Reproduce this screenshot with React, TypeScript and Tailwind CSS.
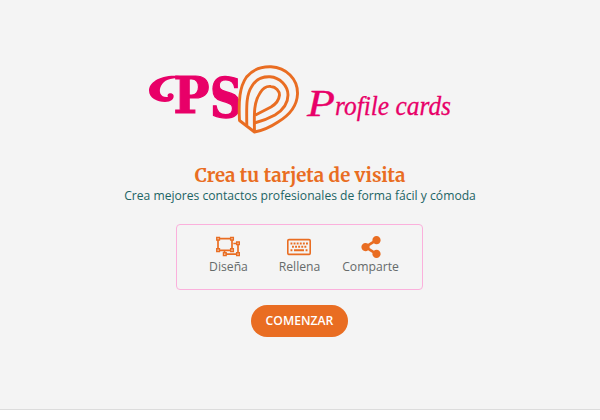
import React from "react";
import { FaShareAlt } from "react-icons/fa";

function Logo() {
  return (
    <svg className="block h-[80px] w-[320px]" viewBox="140 60 320 80" role="img" aria-label="PS Profile cards">
      <g fill="#e80068" stroke="#e80068">
        <text x="173.500" y="113.200" strokeWidth="1.200" fontFamily="'DejaVu Serif', serif" fontWeight="700" fontSize="50" textLength="36" lengthAdjust="spacingAndGlyphs">P</text>
        <text x="210" y="116.500" strokeWidth="1.400" fontFamily="'DejaVu Serif', serif" fontWeight="700" fontSize="55" textLength="32" lengthAdjust="spacingAndGlyphs">S</text>
        <path stroke="none" d="M180 76C161 74 149 82 149 90.500C149 98 157 102 165 102C171 102 174.500 99 173.500 95C172 92 166 93 168 97C161 98 158 92 161 86C164 80 170 78 180 78Z" />
      </g>
      <g fill="none" stroke="#e96d22" strokeWidth="2.9" strokeLinejoin="round">
        <path d="M239.500 120.500C238.500 101 239.500 87 246.500 77C253 69 262 66.500 271 66.800C286 67.500 298 79 297.500 94C297 107 288 116 278 122Q266 130 254.500 132Z" />
        <path d="M246.800 125C246.500 106 246 95 252 86C256 79 263 76.500 270 76.800C280 77.500 288 86 288 95C288 104 283 110 275 115Q266 120 254.500 123" />
        <path d="M254.500 132C254 112 254 102 260 93C263 88 267 86 271 86.500C276 87 279.500 91 279.500 95C279 100 276 104 271 107L255.500 115" />
      </g>
      <g fill="#e80068" stroke="#e80068" strokeWidth=".3" fontFamily="'Liberation Serif', serif" fontStyle="italic">
        <text x="307" y="116" fontSize="38" textLength="28" lengthAdjust="spacingAndGlyphs">P</text>
        <text x="335" y="114.500" fontSize="27" textLength="116" lengthAdjust="spacingAndGlyphs">rofile cards</text>
      </g>
    </svg>
  );
}

function DesignIcon() {
  return (
    <svg className="mr-[2px] h-6 w-6" viewBox="0 0 24 24" fill="none" stroke="#e96d22" strokeWidth="1.7">
      <path d="M3.500 3.700H14.500M16 5V14M14.500 15.300H3.500M2 14V5M17.300 8.500H21M22 9.500V18M21 19.200H10M8.500 18V15.800" />
      <path strokeWidth="1.500" d="M.8 2.500H3.400V5.100H.8ZM14.700 2.500H17.300V5.100H14.700ZM.8 13.800H3.400V16.400H.8ZM14.700 13.800H17.300V16.400H14.700ZM20.700 7H23.300V9.600H20.700ZM20.700 17.800H23.300V20.400H20.700ZM7.500 17.800H10.100V20.400H7.500Z" />
    </svg>
  );
}

function KeyboardIcon() {
  return (
    <svg className="mr-px h-6 w-6" viewBox="0 0 24 24" fill="none" stroke="#e96d22">
      <rect x=".8" y="4.600" width="22.400" height="14.800" rx="1.200" strokeWidth="1.600" />
      <path d="M3.500 8.500H21M5 11.800H20" strokeWidth="1.900" strokeDasharray="1.900 1.200" />
      <path d="M3.500 15.200H5.400M7 15.200H17M18.600 15.200H20.500" strokeWidth="1.900" />
    </svg>
  );
}

function Step({ icon, label }: { icon: React.ReactNode; label: string }) {
  return (
    <li className="flex w-[71px] flex-col items-center">
      <span className="flex h-6 items-center text-[#e96d22]">{icon}</span>
      <span className="text-[12.2px] leading-4 text-[#666b6b]">{label}</span>
    </li>
  );
}

export default function App() {
  return (
    <div className="h-[420px] w-[600px] bg-white font-['Open_Sans',sans-serif]">
      <main className="flex h-[410px] flex-col items-center border-b border-[#dcdcdc] bg-[#f4f4f4] pt-[60px]">
        <Logo />
        <h1 className="mt-[23px] font-['Merriweather','Noto_Serif','DejaVu_Serif',serif] text-[18.6px] leading-[26px] font-bold whitespace-nowrap text-[#e96d22]">
          Crea tu tarjeta de visita
        </h1>
        <p className="-mt-px text-[12.14px] leading-4 whitespace-nowrap text-[#1c6464]">Crea mejores contactos profesionales de forma fácil y cómoda</p>
        <ul className="mt-[20px] mr-px flex h-[66px] w-[247px] justify-center rounded-[4px] border border-[#fbb0dc] pt-[10px]">
          <Step icon={<DesignIcon />} label="Diseña" />
          <Step icon={<KeyboardIcon />} label="Rellena" />
          <Step icon={<FaShareAlt size={22} />} label="Comparte" />
        </ul>
        <button className="mt-[15px] mr-px h-8 w-[97px] rounded-full bg-[#e96d22] text-[12.2px] font-semibold text-white">COMENZAR</button>
      </main>
    </div>
  );
}
